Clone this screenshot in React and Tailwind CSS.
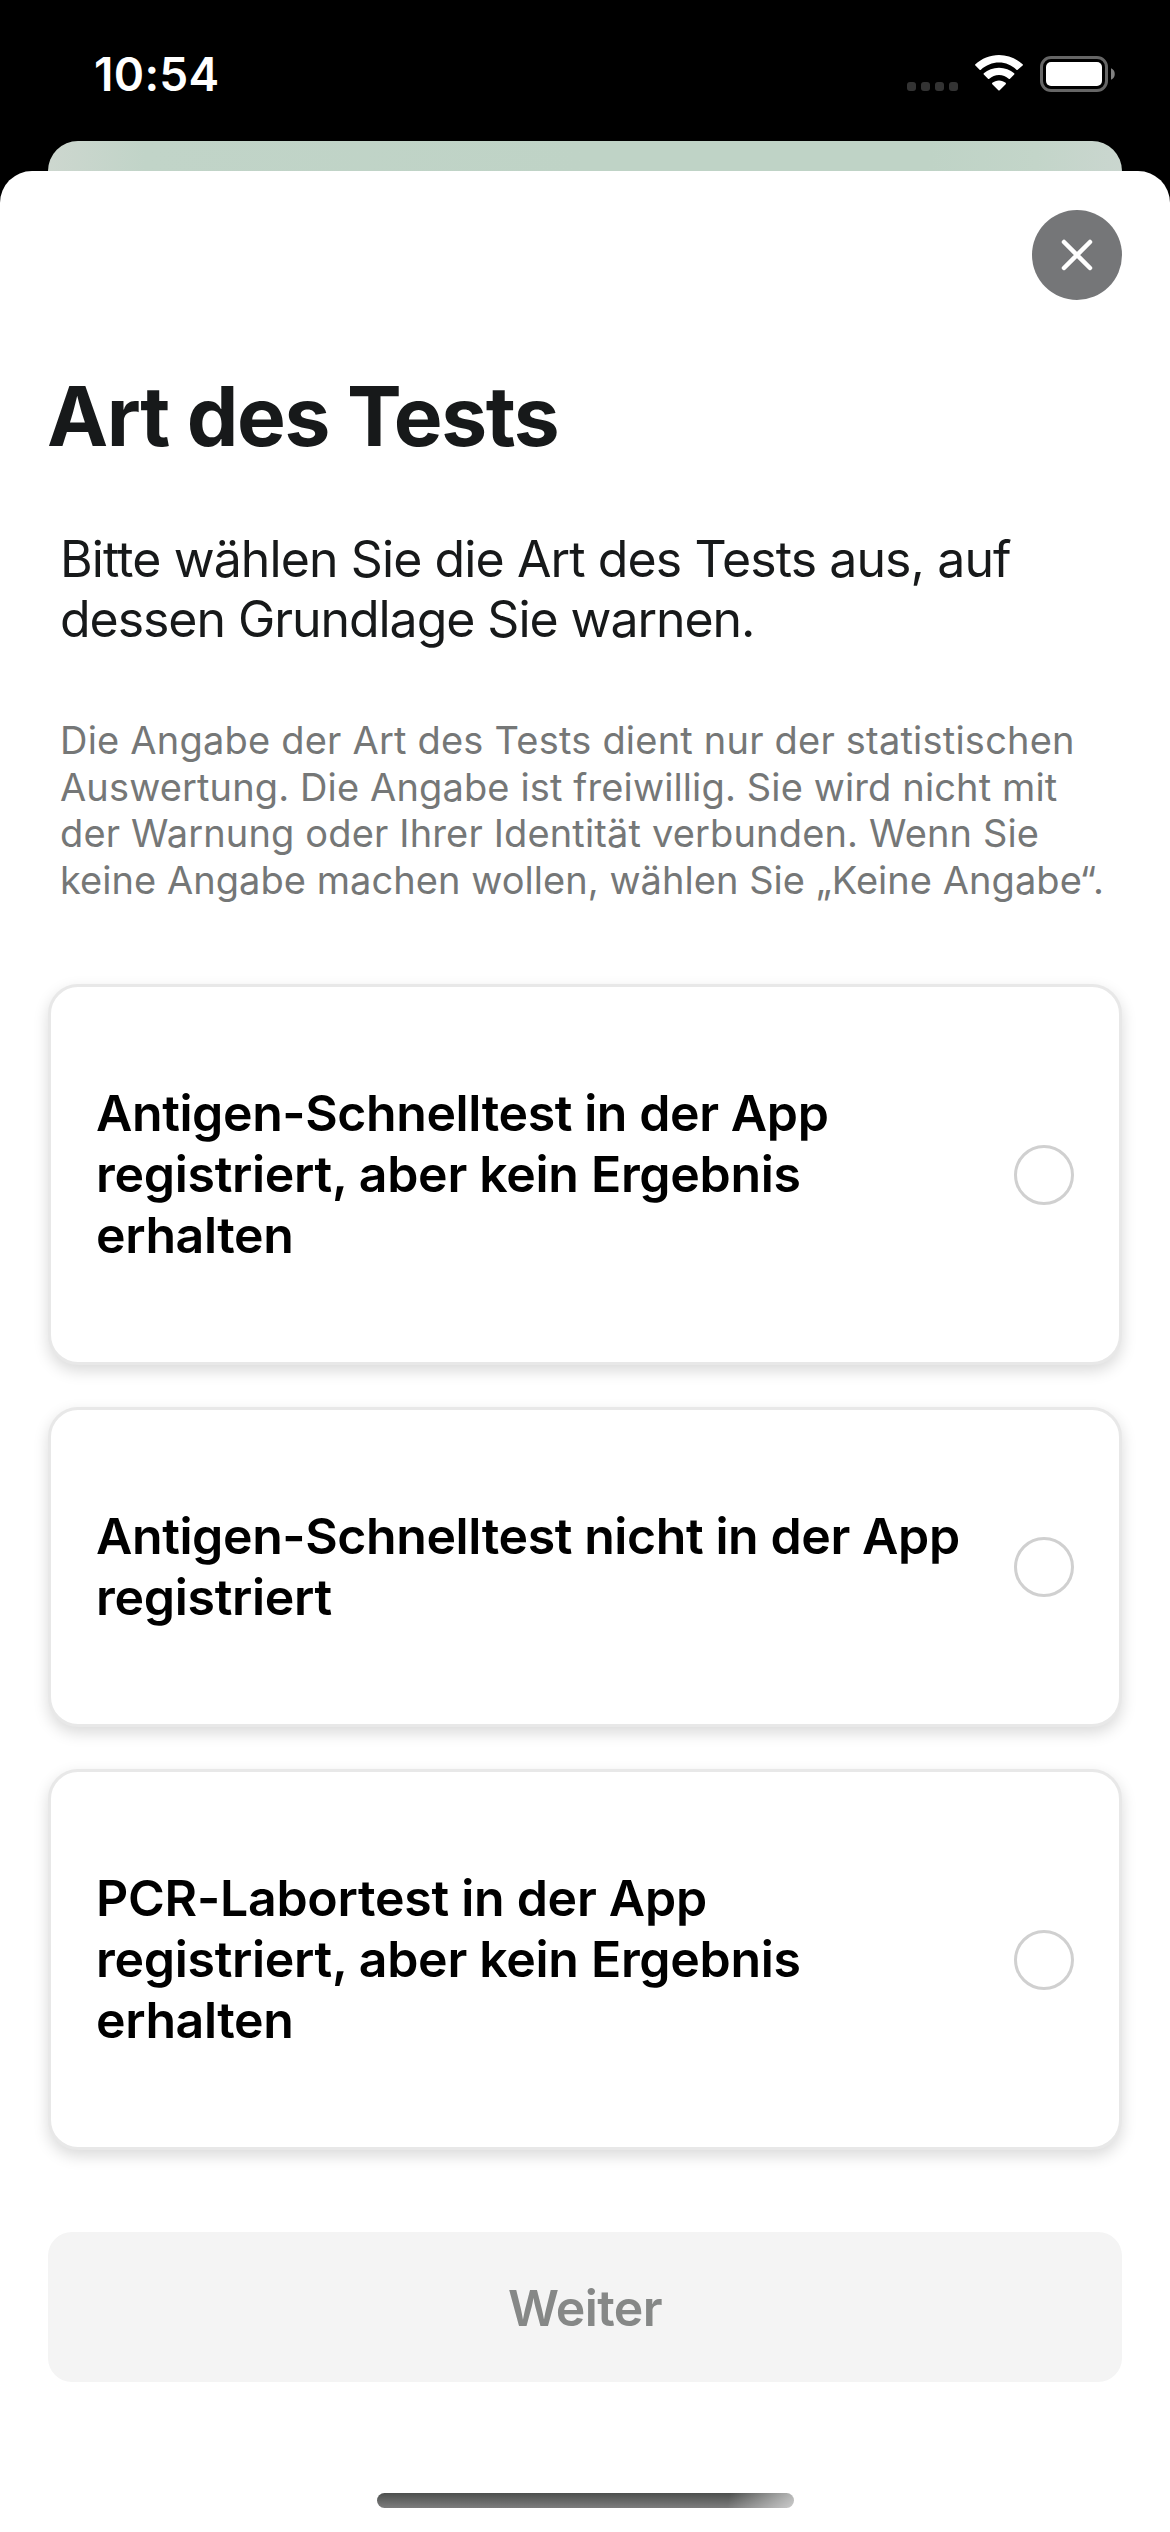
const OPTIONS = [
  [
    { text: 'Antigen-Schnelltest in der App', tracking: 'tracking-[-0.4px]' },
    { text: 'registriert, aber kein Ergebnis', tracking: 'tracking-[-0.3px]' },
    { text: 'erhalten', tracking: 'tracking-[-0.4px]' },
  ],
  [
    { text: 'Antigen-Schnelltest nicht in der App', tracking: 'tracking-[-0.4px]' },
    { text: 'registriert', tracking: 'tracking-[-0.3px]' },
  ],
  [
    { text: 'PCR-Labortest in der App', tracking: 'tracking-[-0.26px]' },
    { text: 'registriert, aber kein Ergebnis', tracking: 'tracking-[-0.3px]' },
    { text: 'erhalten', tracking: 'tracking-[-0.4px]' },
  ],
];

const INTRO = [
  { text: 'Bitte wählen Sie die Art des Tests aus, auf', tracking: 'tracking-[-0.9px]' },
  { text: 'dessen Grundlage Sie warnen.', tracking: 'tracking-[-1.05px]' },
];

const NOTE = [
  { text: 'Die Angabe der Art des Tests dient nur der statistischen', tracking: 'tracking-[0.21px]' },
  { text: 'Auswertung. Die Angabe ist freiwillig. Sie wird nicht mit', tracking: 'tracking-[0.13px]' },
  { text: 'der Warnung oder Ihrer Identität verbunden. Wenn Sie', tracking: 'tracking-[0.15px]' },
  { text: 'keine Angabe machen wollen, wählen Sie „Keine Angabe“.', tracking: 'tracking-[0.05px]' },
];

function Lines({ lines }) {
  return lines.map(({ text, tracking }) => (
    <span key={text} className={`block whitespace-nowrap ${tracking}`}>{text}</span>
  ));
}

function StatusBar() {
  return (
    <header className="flex h-[141px] items-start justify-between pl-[94px] pr-[54px] pt-[45px] text-white">
      <time className="-mt-px text-[46px] font-semibold leading-[60px] tracking-[0.3px]">10:54</time>
      <div className="flex pt-2.5">
        <div className="mt-[27px] mr-[17px] flex gap-[5px]">
          {[0, 1, 2, 3].map((i) => (
            <span key={i} className="size-[9px] rounded-[3px] bg-[#333333]" />
          ))}
        </div>
        <svg className="mr-[17px] h-9 w-12" viewBox="0 0 48 36" fill="currentColor">
          <path d="M24 7.6c6.7 0 12.800 2.600 17.400 7.200.4.4.9.4 1.300 0l4.900-4.200c.5-.4.500-.9 0-1.300C41.300 3.500 33 0 24 0S6.700 3.500.4 9.300c-.5.4-.5.900 0 1.300l4.200 4.200c.4.4.900.4 1.300 0C10.900 10.200 17.300 7.600 24 7.600z" />
          <path d="M24 20.100c3.700 0 7.100 1.400 9.700 3.700.4.4.9.4 1.300 0l4.200-4.200c.4-.4.4-1 0-1.400C35.200 14.900 29.900 12.700 24 12.700S12.800 14.900 8.800 18.200c-.4.4-.4 1 0 1.400l4.200 4.200c.4.4.9.4 1.300 0 2.600-2.300 6-3.700 9.700-3.700z" />
          <path d="M30.700 29.200c.4-.4.400-1 0-1.400-1.800-1.500-4.200-2.400-6.700-2.400s-4.900.9-6.700 2.400c-.4.4-.4 1 0 1.400l6 6c.4.4 1 .4 1.400 0z" />
        </svg>
        <svg className="mt-px h-9 w-[76px]" viewBox="0 0 76 36">
          <rect x="1.500" y="1.500" width="65" height="33" rx="9.500" fill="none" stroke="#666666" strokeWidth="3" />
          <rect x="6" y="6" width="56" height="24" rx="5" fill="#ffffff" />
          <path d="M71 12.300v11.400a6.200 6.200 0 0 0 0-11.400z" fill="#808080" />
        </svg>
      </div>
    </header>
  );
}

function OptionCard({ lines }) {
  return (
    <button
      type="button"
      className="flex w-full items-center justify-between rounded-[30px] border-[3px] border-[#e8e8e8] bg-white py-[96px] pl-[45px] pr-[45px] text-left shadow-[0_6px_15px_rgba(0,0,0,0.15)]"
    >
      <span className="text-[50px] font-semibold leading-[61px] text-black">
        <Lines lines={lines} />
      </span>
      <span className="size-[60px] shrink-0 rounded-full border-[3px] border-[#d0d0d0]" />
    </button>
  );
}

export default function App() {
  return (
    <div className="flex h-[2532px] w-[1170px] flex-col overflow-hidden bg-black font-['Inter',sans-serif]">
      <StatusBar />
      <div className="mx-12 h-[30px] shrink-0 rounded-t-[30px] bg-[linear-gradient(90deg,#cdd7cf_0%,#c1d4c8_9%,#bfd3c6_50%,#bfd3c6_82%,#c3d5c9_92%,#cad6cf_100%)]" />
      <main className="flex flex-1 flex-col rounded-t-[32px] bg-white px-12 pt-[39px]">
        <button type="button" aria-label="Schließen" className="flex size-[90px] items-center justify-center self-end rounded-full bg-[#757678]">
          <svg className="size-9" viewBox="0 0 36 36" fill="none" stroke="#ffffff" strokeWidth="4.500" strokeLinecap="round">
            <path d="M5 5l26 26M31 5L5 31" />
          </svg>
        </button>
        <h1 className="-ml-px mt-[67px] text-[82px] font-bold leading-[100px] tracking-[-1.45px] text-[#17191a]">Art des Tests</h1>
        <p className="mt-[62px] pl-3 text-[50px] leading-[60px] text-[#17191a]">
          <Lines lines={INTRO} />
        </p>
        <p className="mt-[68px] pl-3 text-[38px] leading-[46.500px] text-[#757777]">
          <Lines lines={NOTE} />
        </p>
        <div className="mt-[81px] flex flex-col gap-[42px]">
          {OPTIONS.map((lines) => (
            <OptionCard key={lines[0].text} lines={lines} />
          ))}
        </div>
        <button type="button" className="mt-[82px] h-[150px] shrink-0 rounded-[24px] bg-[#f4f4f4] pt-0.5 text-[50px] font-semibold tracking-[-0.6px] text-[#868887]">
          Weiter
        </button>
        <div className="mt-[111px] h-[15px] w-[417px] shrink-0 self-center rounded-full bg-[linear-gradient(100deg,transparent_84%,rgba(255,255,255,0.6)_100%),linear-gradient(180deg,#4d4f4e,#7d7d7d)]" />
      </main>
    </div>
  );
}
